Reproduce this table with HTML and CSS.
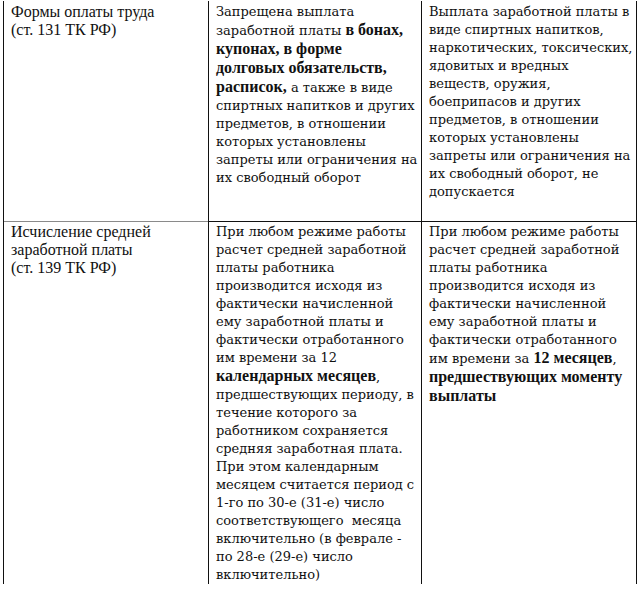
FILE: index.html
```html
<!DOCTYPE html>
<html lang="ru">
<head>
<meta charset="utf-8">
<title>Оплата труда</title>
<link rel="stylesheet" href="styles.css">
</head>
<body>
<table class="grid">
  <colgroup>
    <col class="c1">
    <col class="c2">
    <col class="c3">
  </colgroup>
  <tr class="row-first">
    <td class="label">Формы оплаты труда<br>(ст. 131 ТК РФ)</td>
    <td class="text">Запрещена выплата<br>заработной платы <b>в бонах,</b><br><b>купонах, в форме</b><br><b>долговых обязательств,</b><br><b>расписок,</b> а также в виде<br>спиртных напитков и других<br>предметов, в отношении<br>которых установлены<br>запреты или ограничения на<br>их свободный оборот</td>
    <td class="text">Выплата заработной платы в<br>виде спиртных напитков,<br>наркотических, токсических,<br>ядовитых и вредных<br>веществ, оружия,<br>боеприпасов и других<br>предметов, в отношении<br>которых установлены<br>запреты или ограничения на<br>их свободный оборот, не<br>допускается</td>
  </tr>
  <tr class="row-second">
    <td class="label">Исчисление средней<br>заработной платы<br>(ст. 139 ТК РФ)</td>
    <td class="text">При любом режиме работы<br>расчет средней заработной<br>платы работника<br>производится исходя из<br>фактически начисленной<br>ему заработной платы и<br>фактически отработанного<br>им времени за 12<br><b>календарных месяцев</b>,<br>предшествующих периоду, в<br>течение которого за<br>работником сохраняется<br>средняя заработная плата.<br>При этом календарным<br>месяцем считается период с<br>1-го по 30-е (31-е) число<br>соответствующего&nbsp; месяца<br>включительно (в феврале -<br>по 28-е (29-е) число<br>включительно)</td>
    <td class="text">При любом режиме работы<br>расчет средней заработной<br>платы работника<br>производится исходя из<br>фактически начисленной<br>ему заработной платы и<br>фактически отработанного<br>им времени за <b>12 месяцев</b>,<br><b>предшествующих моменту</b><br><b>выплаты</b></td>
  </tr>
</table>
</body>
</html>
```

FILE: styles.css
```css
html, body {
  margin: 0;
  padding: 0;
  background: #ffffff;
}

body {
  padding: 1px 0 0 3px;
  color: #111111;
}

.grid {
  border-collapse: collapse;
  table-layout: fixed;
  width: 633px;
  border-left: 1px solid #111;
  border-right: 1px solid #111;
}

.c1 { width: 205px; }
.c2 { width: 213px; }
.c3 { width: 215px; }

.grid td {
  vertical-align: top;
  padding: 2px 7px 0 7px;
  line-height: 18px;
  border-left: 1px solid #111;
  border-right: 1px solid #111;
  white-space: nowrap;
}

.row-first td {
  height: 218px;
  padding-top: 2px;
}

.row-second td {
  border-top: 1px solid #111;
  padding-top: 1px;
}

.row-second td.label {
  border-top-color: #8a8a8a;
}

.label {
  font-family: "Liberation Serif", "Times New Roman", serif;
  font-size: 16px;
}

.text {
  font-family: "DejaVu Serif", serif;
  font-size: 13px;
}

.text b {
  font-family: "Liberation Serif", "Times New Roman", serif;
  font-size: 16px;
  font-weight: bold;
}
```
